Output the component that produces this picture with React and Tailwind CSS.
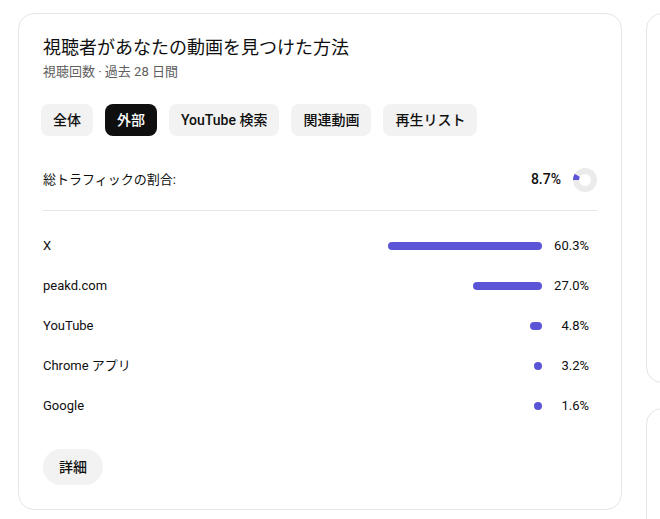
import React from "react";

const chips = [
  { label: "全体", active: false },
  { label: "外部", active: true },
  { label: "YouTube 検索", active: false },
  { label: "関連動画", active: false },
  { label: "再生リスト", active: false },
];

const sources = [
  { name: "X", pct: 60.3 },
  { name: "peakd.com", pct: 27.0 },
  { name: "YouTube", pct: 4.8 },
  { name: "Chrome アプリ", pct: 3.2 },
  { name: "Google", pct: 1.6 },
];

const BAR_MAX = 255;

const Donut = () => (
  <svg width="24" height="24" viewBox="0 0 24 24">
    <circle cx="12" cy="12" r="9" fill="none" stroke="#ebebeb" strokeWidth="6" />
    <path d="M3 12 A9 9 0 0 1 4.29 7.36" fill="none" stroke="#5b54d6" strokeWidth="6" />
  </svg>
);

const App = () => {
  return (
    <div
      className="w-[660px] h-[519px] overflow-hidden bg-white flex items-start gap-6 pl-[18px] pt-[13px] text-[#0f0f0f]"
      style={{ fontFamily: 'Roboto, "Noto Sans CJK JP", sans-serif' }}
    >
      {/* Main card */}
      <div className="w-[604px] h-[497px] shrink-0 border border-[#e5e5e5] rounded-2xl px-6 pt-[22px] pb-6 flex flex-col">
        <h2 className="text-[18px] leading-6">視聴者があなたの動画を見つけた方法</h2>
        <p className="text-[13px] leading-[18px] text-[#606060] mt-[3px]">視聴回数 · 過去 28 日間</p>

        {/* Chips */}
        <div className="flex gap-3 mt-[23px] -ml-[2px]">
          {chips.map((c) => (
            <div
              key={c.label}
              className={
                c.active
                  ? "h-8 px-3 rounded-lg flex items-center text-[14px] font-medium bg-[#0f0f0f] text-white"
                  : "h-8 px-3 rounded-lg flex items-center text-[14px] font-medium bg-[#f2f2f2] text-[#0f0f0f]"
              }
            >
              {c.label}
            </div>
          ))}
        </div>

        {/* Share of total traffic */}
        <div className="flex items-center h-10 mt-6">
          <span className="flex-1 text-[13px]">総トラフィックの割合:</span>
          <span className="text-[14px] font-medium mr-3">8.7%</span>
          <Donut />
        </div>

        <div className="h-px bg-[#e5e5e5] mt-[11px] shrink-0" />

        {/* Source rows */}
        <div className="flex flex-col mt-[15px]">
          {sources.map((s) => (
            <div key={s.name} className="flex items-center h-10">
              <span className="flex-1 text-[13px]">{s.name}</span>
              <div className="w-[255px] flex justify-end">
                <div
                  className="h-2 rounded-full bg-[#5b54d6]"
                  style={{ width: Math.max(8, Math.round((s.pct / 100) * BAR_MAX)) }}
                />
              </div>
              <span className="w-[47px] text-right text-[13px]">{s.pct.toFixed(1)}%</span>
              <span className="w-2" />
            </div>
          ))}
        </div>

        <div className="mt-[23px]">
          <button className="h-9 px-4 rounded-full bg-[#f2f2f2] text-[14px] font-medium">詳細</button>
        </div>
      </div>

      {/* Right column, cut off */}
      <div className="flex flex-col gap-[25px] shrink-0">
        <div className="w-[300px] h-[370px] shrink-0 border border-[#e5e5e5] rounded-2xl" />
        <div className="w-[300px] h-[300px] shrink-0 border border-[#e5e5e5] rounded-2xl" />
      </div>
    </div>
  );
};

export default App;
